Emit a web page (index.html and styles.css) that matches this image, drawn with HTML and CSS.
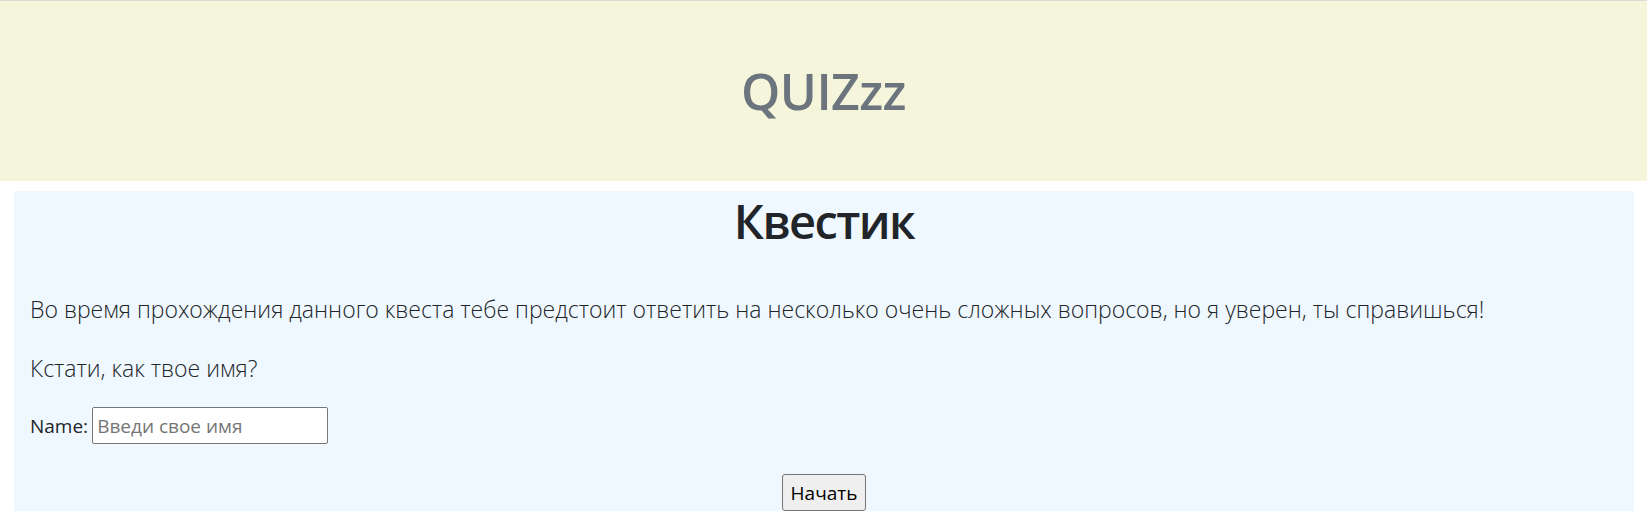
FILE: index.html
```html
<!DOCTYPE html>
<html lang="ru">
<head>
<meta charset="utf-8">
<title>QUIZzz</title>
<link rel="stylesheet" href="styles.css">
</head>
<body>
<header class="site-header">
  <h1 class="brand">QUIZzz</h1>
</header>
<main class="quest">
  <h1 class="quest-title">Квестик</h1>
  <p class="lead">Во время прохождения данного квеста тебе предстоит ответить на несколько очень сложных вопросов, но я уверен, ты справишься!</p>
  <p class="lead lead-question">Кстати, как твое имя?</p>
  <form class="name-form">
    <div class="name-row">
      <label for="name" class="name-label">Name:</label>
      <input type="text" id="name" class="name-input" placeholder="Введи свое имя">
    </div>
    <div class="actions">
      <button type="button" class="start-btn">Начать</button>
    </div>
  </form>
</main>
</body>
</html>
```
FILE: styles.css
```css
html, body {
  margin: 0;
  padding: 0;
}
body {
  font-family: "Open Sans", "Noto Sans", sans-serif;
  color: #212529;
  background: #ffffff;
  border-top: 1px solid #dadada;
}
.site-header {
  background: #f5f5dc;
  height: 180px;
  display: flex;
  align-items: center;
  justify-content: center;
}
.brand {
  margin: 0;
  font-size: 50px;
  letter-spacing: -0.6px;
  font-weight: 600;
  color: #6c757d;
  line-height: 1;
}
.quest {
  margin: 10px 13px 0 14px;
  background: #f0f8ff;
  padding: 0 16px;
}
.quest-title {
  margin: 0;
  text-align: center;
  font-size: 47px;
  letter-spacing: -1.6px;
  line-height: 60px;
  font-weight: 600;
  color: #212529;
}
.lead {
  margin: 40px 0 0;
  font-size: 23px;
  line-height: 37px;
  font-weight: 300;
}
.lead-question {
  margin-top: 22px;
}
.name-form {
  margin: 20px 0 0;
}
.name-row {
  display: flex;
  align-items: center;
  gap: 4px;
}
.name-label {
  font-size: 19px;
}
.name-input {
  box-sizing: border-box;
  width: 236px;
  height: 37px;
  padding: 0 4px;
  border: 1px solid #767676;
  border-radius: 2px;
  font-family: inherit;
  font-size: 19px;
  color: #212529;
  background: #fff;
}
.name-input::placeholder {
  color: #757575;
}
.actions {
  display: flex;
  justify-content: center;
  margin-top: 30px;
}
.start-btn {
  box-sizing: border-box;
  height: 37px;
  width: 84px;
  padding: 0;
  font-family: inherit;
  font-size: 19px;
  color: #000;
  background: #efefef;
  border: 1px solid #767676;
  border-radius: 3px;
}
```
